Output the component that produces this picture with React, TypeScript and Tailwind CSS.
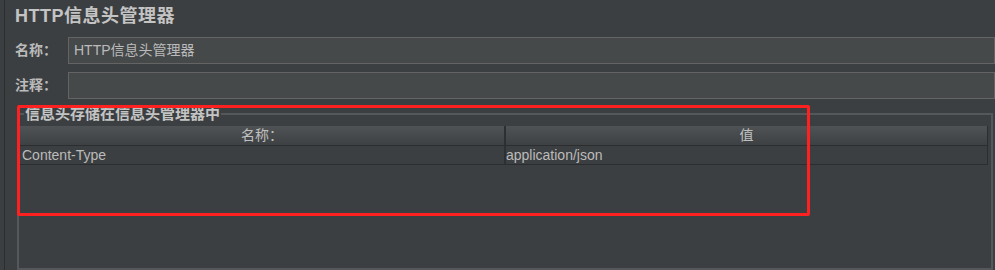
const font = { fontFamily: '"Liberation Sans", "Noto Sans CJK SC", sans-serif' };

const headers = [
  { name: 'Content-Type', value: 'application/json' },
];

const App = () => {
  return (
    <div
      className="relative w-[995px] h-[270px] overflow-hidden bg-[#3c3f41] pl-[4px] text-[#bbbbbb]"
      style={font}
    >
      <div className="flex h-full flex-col border-l border-[#2b2d2e] pl-[10px]">
        {/* Title */}
        <div className="pt-[4px] text-[18px] font-bold leading-[24px] tracking-[0.5px] text-[#c4c4c4]">
          HTTP信息头管理器
        </div>

        {/* Name / comment fields */}
        <div className="mt-[9px] flex flex-col gap-[8px]">
          <div className="flex items-center">
            <label className="w-[53px] text-[14px] font-bold leading-[27px]">名称：</label>
            <div className="flex h-[27px] flex-1 items-center border border-[#646464] bg-[#45494a] px-[5px] text-[14px]">
              HTTP信息头管理器
            </div>
          </div>
          <div className="flex items-center">
            <label className="w-[53px] text-[14px] font-bold leading-[27px]">注释：</label>
            <div className="h-[27px] flex-1 border border-[#646464] bg-[#45494a]"></div>
          </div>
        </div>

        {/* Headers group */}
        <fieldset className="mx-[2px] mt-[7px] flex-1 border-2 border-[#55585a] pl-[1px] pr-[3px]">
          <legend className="ml-[4px] px-[1px] text-[15px] font-bold leading-[16px] text-[#c4c4c4]">
            信息头存储在信息头管理器中
          </legend>
          <div className="mt-[4px] border-r border-[#2b2d2e]">
            <div className="grid h-[20px] grid-cols-[486px_1fr] border-b border-[#2b2d2e] bg-gradient-to-b from-[#505355] to-[#3e4143] text-[14px] leading-[19px] text-[#c0c0c0]">
              <div className="border-r-2 border-[#2d2f30] text-center">名称：</div>
              <div className="text-center">值</div>
            </div>
            {headers.map((h) => (
              <div
                key={h.name}
                className="grid h-[19px] grid-cols-[486px_1fr] border-b border-[#2b2d2e] text-[14px] leading-[18px]"
              >
                <div className="border-r-2 border-[#2d2f30] pl-[2px]">{h.name}</div>
                <div>{h.value}</div>
              </div>
            ))}
          </div>
        </fieldset>
      </div>

      {/* Annotation */}
      <div className="pointer-events-none absolute left-[17px] top-[105px] h-[111px] w-[793px] rounded-[2px] border-[3px] border-[#ff2020]"></div>
    </div>
  );
};

export default App;
